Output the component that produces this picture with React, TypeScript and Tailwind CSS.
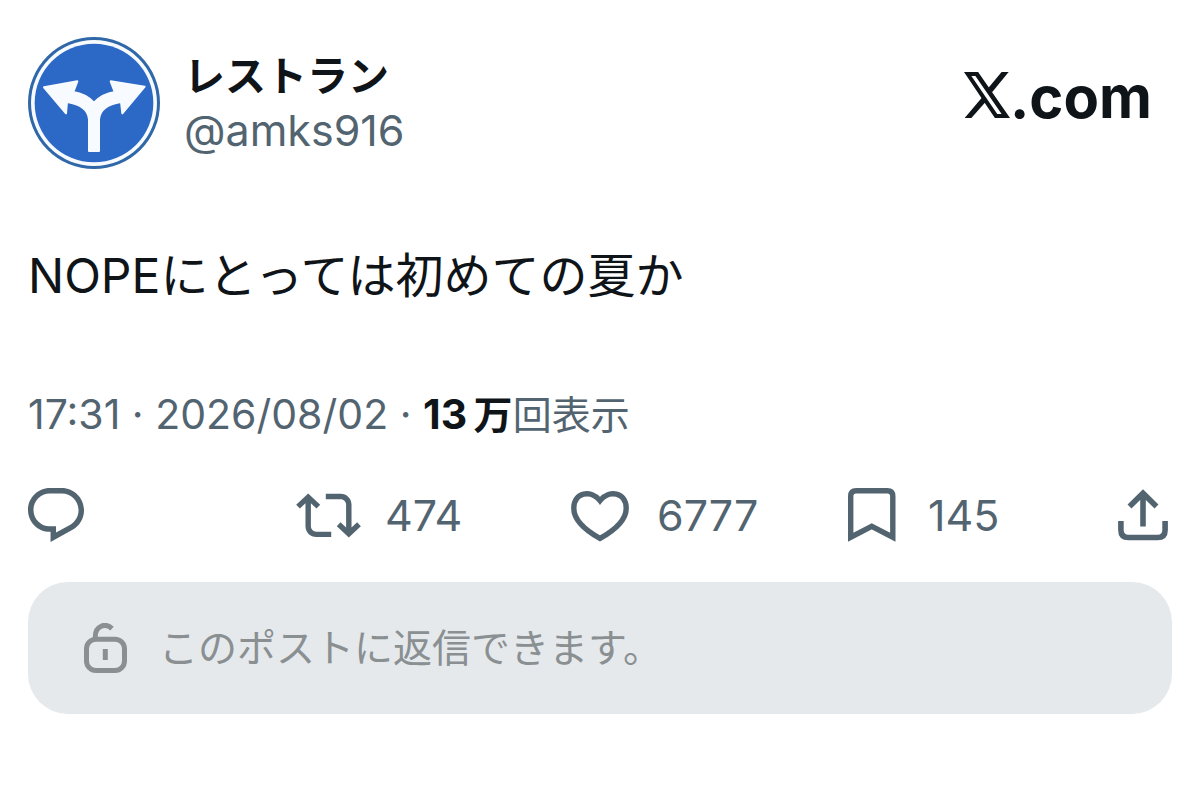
import React from 'react';

interface IconProps {
  className?: string;
}

const Avatar: React.FC<IconProps> = ({ className }) => (
  <svg viewBox="52 51 396 396" className={className} role="img" aria-label="レストラン">
    <circle cx="250" cy="249" r="198" fill="#2f67a8" />
    <circle cx="250" cy="249" r="189" fill="#f7fbff" />
    <circle cx="250" cy="249" r="178" fill="#2c68c5" />
    <g fill="#f7fafe" stroke="#f7fafe" strokeWidth="6" strokeLinejoin="round">
      <path d="M100 202 L200 184 L188 216 Q226 222 250 248 Q274 222 312 216 L300 184 L402 200 L335 280 L331 246 Q268 256 265 298 L265 393 L235 393 L235 298 Q232 256 169 246 L166 280 Z" />
    </g>
  </svg>
);

const XLogo: React.FC<IconProps> = ({ className }) => (
  <svg viewBox="75 71 137 137" className={className} fill="#0f1419" aria-hidden="true">
    <path fillRule="evenodd" d="M75 71 H117 L212 208 H167 Z M97 83 L174 196 H187 L109 83 Z" />
    <path d="M187 71 H208 L158 132 L148 118 Z" />
    <path d="M77 208 H97 L143 156 L133 142 Z" />
  </svg>
);

const ReplyIcon: React.FC<IconProps> = ({ className }) => (
  <svg viewBox="1.75 2 20.5 19.7" className={className} fill="currentColor" aria-hidden="true">
    <path d="M1.751 10c0-4.42 3.584-8 8.005-8h4.366c4.49 0 8.129 3.64 8.129 8.13 0 2.96-1.607 5.68-4.196 7.11l-8.054 4.46v-3.69h-.067c-4.49.1-8.183-3.51-8.183-8.01zm8.005-6c-3.317 0-6.005 2.69-6.005 6 0 3.37 2.77 6.08 6.138 6.01l.351-.01h1.761v2.3l5.087-2.81c1.951-1.08 3.163-3.13 3.163-5.36 0-3.39-2.744-6.13-6.129-6.13H9.756z" />
  </svg>
);

const RepostIcon: React.FC<IconProps> = ({ className }) => (
  <svg viewBox="0 2 24 19.7" className={className} fill="currentColor" aria-hidden="true">
    <path d="M4.5 3.88l4.432 4.14-1.364 1.46L5.5 7.55V16c0 1.1.896 2 2 2H13v2H7.5c-2.209 0-4-1.79-4-4V7.55L1.432 9.48.068 8.02 4.5 3.88zM16.5 6H11V4h5.5c2.209 0 4 1.79 4 4v8.45l2.068-1.93 1.364 1.46-4.432 4.14-4.432-4.14 1.364-1.46 2.068 1.93V8c0-1.1-.896-2-2-2z" />
  </svg>
);

const HeartIcon: React.FC<IconProps> = ({ className }) => (
  <svg viewBox="0 0 58 54" className={className} fill="none" stroke="currentColor" strokeWidth="5.4" aria-hidden="true">
    <path d="M29 12.6 C20 1.5 2.8 4 2.8 20.2 C2.8 32 14 42 29 50.4 C44 42 55.2 32 55.2 20.2 C55.2 4 38 1.5 29 12.6 Z" />
  </svg>
);

const BookmarkIcon: React.FC<IconProps> = ({ className }) => (
  <svg viewBox="0 0 48 54" className={className} fill="none" stroke="currentColor" strokeWidth="5.4" aria-hidden="true">
    <path d="M2.7 49.2 V8.2 Q2.7 2.7 8.2 2.7 H39.3 Q44.8 2.7 44.8 8.2 V49.2 L23.75 38.3 Z" />
  </svg>
);

const ShareIcon: React.FC<IconProps> = ({ className }) => (
  <svg viewBox="0 0 50 54" className={className} fill="none" stroke="currentColor" strokeWidth="5.6" aria-hidden="true">
    <path d="M25 38.5 V5.5 M11.5 18.5 L25 5.2 L38.5 18.5" />
    <path d="M2.9 33 V42 Q2.9 49.5 10.4 49.5 H39.6 Q47.1 49.5 47.1 42 V33" />
  </svg>
);

const UnlockIcon: React.FC<IconProps> = ({ className }) => (
  <svg viewBox="0 0 43 50" className={className} fill="none" stroke="currentColor" strokeWidth="5" aria-hidden="true">
    <rect x="2.5" y="16.3" width="38" height="31.2" rx="9.5" />
    <path d="M11.3 16 V13.5 C11.3 3 21.5 -0.8 28 5.6" />
    <path d="M21.3 26 V37" />
  </svg>
);

const App: React.FC = () => {
  return (
    <main className="min-h-screen bg-white px-7 pt-[37px] font-[Inter,'Noto_Sans_CJK_JP',sans-serif] text-[#0f1419]">
      <article>
        <header className="flex items-start justify-between">
          <div className="flex items-start gap-6">
            <Avatar className="h-[132px] w-[132px] shrink-0" />
            <div className="pt-3">
              <h1 className="text-[41px] leading-[54px] font-bold">レストラン</h1>
              <a href="#profile" className="block text-[43px] leading-[54px] text-[#536471]">
                @amks916
              </a>
            </div>
          </div>
          <a href="#home" aria-label="X.com" className="flex items-baseline pt-6 pr-5">
            <XLogo className="h-[46px] w-[46px]" />
            <span className="text-[58px] leading-[72px] font-bold">.com</span>
          </a>
        </header>

        <p className="mt-[71px] text-[48px] leading-[72px]">NOPEにとっては初めての夏か</p>

        <p className="mt-[72px] text-[41px] leading-[60px] text-[#536471]">
          <time>17:31 · 2026/08/02</time> · <strong className="font-bold text-[#0f1419]">13&thinsp;<span className="text-[39px]">万</span></strong>
          <span className="text-[39px]">回表示</span>
        </p>

        <div className="mt-[43px] grid grid-cols-[268fr_275fr_277fr_270fr_auto] items-center text-[43px] leading-[54px] text-[#536471]">
          <button type="button" aria-label="返信" className="justify-self-start">
            <ReplyIcon className="h-[54px] w-14" />
          </button>
          <button type="button" aria-label="リポスト 474" className="flex items-center gap-6 justify-self-start">
            <RepostIcon className="h-[54px] w-[65px]" />
            474
          </button>
          <button type="button" aria-label="いいね 6777" className="flex items-center gap-7 justify-self-start">
            <HeartIcon className="h-[54px] w-[58px]" />
            6777
          </button>
          <button type="button" aria-label="ブックマーク 145" className="flex items-center gap-8 justify-self-start">
            <BookmarkIcon className="h-[54px] w-12" />
            145
          </button>
          <button type="button" aria-label="共有" className="pr-1">
            <ShareIcon className="h-[54px] w-[50px]" />
          </button>
        </div>

        <div className="mt-10 flex items-center gap-8 rounded-[40px] bg-[#e5e9ec] px-14 py-9 text-[#8a8f92]">
          <UnlockIcon className="h-[50px] w-[43px]" />
          <p className="text-[39px] leading-[60px]">このポストに返信できます。</p>
        </div>
      </article>
    </main>
  );
};

export default App;
